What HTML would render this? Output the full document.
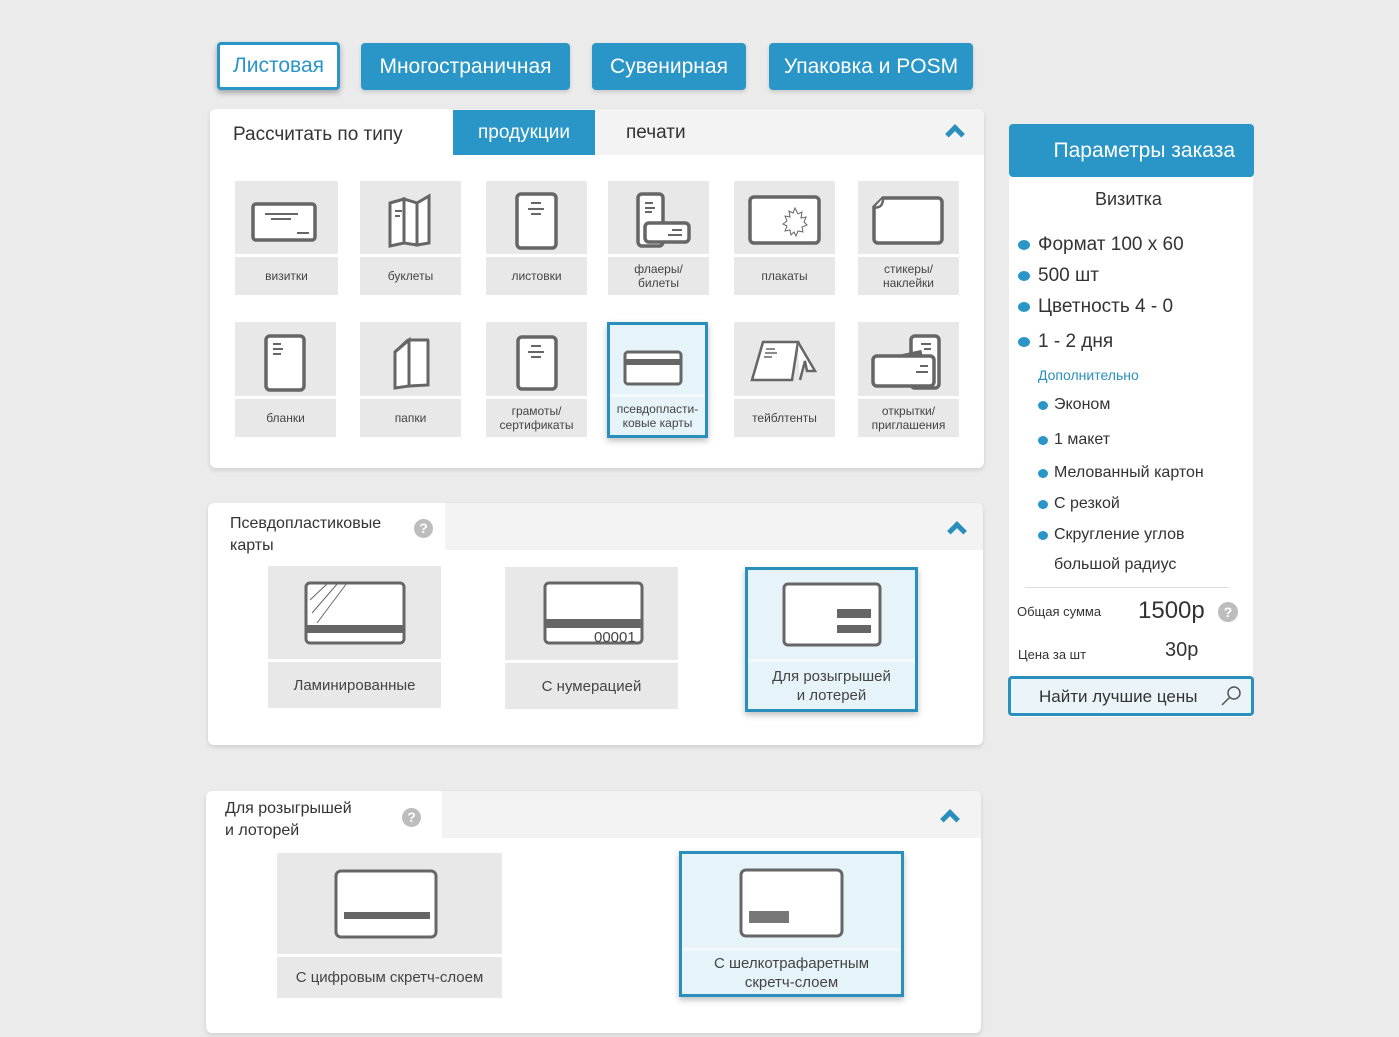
<!DOCTYPE html>
<html><head><meta charset="utf-8"><style>
*{box-sizing:border-box;margin:0;padding:0}
body{width:1399px;height:1037px;background:#ebebeb;font-family:"Liberation Sans",sans-serif;color:#333;position:relative;overflow:hidden}
.a{position:absolute}
.tab{position:absolute;background:#2a96c8;color:#fff;font-size:21px;border-radius:4px;display:flex;align-items:center;justify-content:center;box-shadow:0 2px 4px rgba(0,0,0,.15)}
.panel{position:absolute;background:#fff;border-radius:6px;box-shadow:0 2px 5px rgba(0,0,0,.12);overflow:hidden}
.tile{position:absolute;background:#e8e8e8}
.tile .lab{position:absolute;left:0;right:0;bottom:0;display:flex;align-items:center;justify-content:center;text-align:center;font-size:12px;color:#444;line-height:14px;border-top:3px solid #fff}
.tile svg{position:absolute;left:0;top:0}
.sel{background:#e6f3f9;border:3px solid #2a8fbd;box-shadow:0 3px 6px rgba(0,0,0,.25)}
.chev{position:absolute;width:14px;height:14px;border-left:5px solid #2a8fbd;border-top:5px solid #2a8fbd;transform:rotate(45deg)}
.q{position:absolute;width:19px;height:19px;border-radius:50%;background:#bdbdbd;color:#fff;font-size:14px;font-weight:bold;text-align:center;line-height:19px}
.big .lab{font-size:15px;line-height:19px}
.dot{position:absolute;width:12px;height:10px;border-radius:50%;background:#2a96c8}
.rt{position:absolute;font-size:19px;color:#333}
.st{position:absolute;font-size:16px;color:#333}
</style></head><body>

<div class="tab" style="left:217px;top:42px;width:123px;height:48px;background:#fff;color:#2a96c8;border:3px solid #2a96c8;box-shadow:0 3px 6px rgba(0,0,0,.3)">Листовая</div>
<div class="tab" style="left:361px;top:43px;width:209px;height:47px">Многостраничная</div>
<div class="tab" style="left:592px;top:43px;width:154px;height:47px">Сувенирная</div>
<div class="tab" style="left:769px;top:43px;width:204px;height:47px">Упаковка и POSM</div>

<!-- panel 1 -->
<div class="panel" style="left:210px;top:109px;width:774px;height:359px">
  <div class="a" style="left:243px;top:0;width:531px;height:46px;background:#f3f3f3"></div>
  <div class="a" style="left:243px;top:1px;width:142px;height:45px;background:#2a96c8;color:#fff;font-size:19px;display:flex;align-items:center;justify-content:center">продукции</div>
  <div class="a" style="left:23px;top:15px;font-size:19px">Рассчитать по типу</div>
  <div class="a" style="left:416px;top:13px;font-size:19px">печати</div>
  <div class="chev" style="left:738px;top:18px"></div>
</div>

<!-- row1 -->
<div class="tile" style="left:235px;top:181px;width:103px;height:114px"><svg width="103" height="74" fill="#fff" stroke="#666" stroke-width="3.5"><rect x="18" y="23" width="62" height="36" rx="3"/><path d="M30 33h33M36 38h20M62 52h12" stroke-width="2"/></svg><div class="lab" style="height:41px">визитки</div></div>
<div class="tile" style="left:360px;top:181px;width:101px;height:114px"><svg width="101" height="74" fill="#fff" stroke="#666" stroke-width="3"><path d="M30 22l14-4v44l-14 3z"/><path d="M44 18l13 4v42l-13-2z"/><path d="M57 22l12-7v47l-12 2z"/><path d="M35 30h7M35 35h5" stroke-width="2"/></svg><div class="lab" style="height:41px">буклеты</div></div>
<div class="tile" style="left:486px;top:181px;width:101px;height:114px"><svg width="101" height="74" fill="#fff" stroke="#666" stroke-width="3.5"><rect x="31" y="13" width="39" height="54" rx="4"/><path d="M45 22h10M42 28h16M45 33h10" stroke-width="2"/></svg><div class="lab" style="height:41px">листовки</div></div>
<div class="tile" style="left:608px;top:181px;width:101px;height:114px"><svg width="101" height="74" fill="#fff" stroke="#666" stroke-width="3.5"><rect x="30" y="13" width="25" height="52" rx="4"/><path d="M37 22h8M37 27h10M37 31h7" stroke-width="2"/><rect x="37" y="42" width="44" height="19" rx="4"/><path d="M64 49h10M60 54h14" stroke-width="2"/></svg><div class="lab" style="height:41px">флаеры/<br>билеты</div></div>
<div class="tile" style="left:734px;top:181px;width:101px;height:114px"><svg width="101" height="74" fill="#fff" stroke="#666" stroke-width="3.5"><rect x="16" y="16" width="69" height="46" rx="4"/><path d="M61 27l3 6 4-2-1 6 5-1-2 5 3 3-5 2 1 5-5-1-2 5-2-4-3 3-1-5-5 1 2-5-4-2 4-3-2-5 5 1-1-6 4 2z" stroke-width="1" fill="#fff"/></svg><div class="lab" style="height:41px">плакаты</div></div>
<div class="tile" style="left:858px;top:181px;width:101px;height:114px"><svg width="101" height="74" fill="#fff" stroke="#666" stroke-width="3.5"><path d="M25 17h55a4 4 0 0 1 4 4v37a4 4 0 0 1-4 4H20a4 4 0 0 1-4-4V26z"/><path d="M16 27c4-1 9 0 9-10" stroke-width="2.5"/></svg><div class="lab" style="height:41px">стикеры/<br>наклейки</div></div>

<!-- row2 -->
<div class="tile" style="left:235px;top:322px;width:101px;height:115px"><svg width="101" height="74" fill="#fff" stroke="#666" stroke-width="3.5"><rect x="31" y="14" width="38" height="54" rx="4"/><path d="M38 22h8M38 27h10M38 32h8" stroke-width="2"/></svg><div class="lab" style="height:41px">бланки</div></div>
<div class="tile" style="left:360px;top:322px;width:101px;height:115px"><svg width="101" height="74" fill="#fff" stroke="#666" stroke-width="3"><path d="M35 30l14-12v46l-14 2z"/><path d="M49 18l20 0-1 0v45l-19 1z"/><path d="M35 30l13-12" stroke-width="3"/></svg><div class="lab" style="height:41px">папки</div></div>
<div class="tile" style="left:486px;top:322px;width:101px;height:115px"><svg width="101" height="74" fill="#fff" stroke="#666" stroke-width="3.5"><rect x="32" y="15" width="38" height="52" rx="4"/><path d="M45 24h10M42 30h16M45 35h10" stroke-width="2"/></svg><div class="lab" style="height:41px">грамоты/<br>сертификаты</div></div>
<div class="tile sel" style="left:607px;top:322px;width:101px;height:116px"><svg width="95" height="74" fill="#fff" stroke="#666" stroke-width="3"><rect x="15" y="27" width="56" height="32" rx="3"/><rect x="16" y="34" width="54" height="6" fill="#666" stroke="none"/></svg><div class="lab" style="height:41px;border-top-color:#f2f9fc">псевдопласти-<br>ковые карты</div></div>
<div class="tile" style="left:734px;top:322px;width:101px;height:115px"><svg width="101" height="74" fill="#fff" stroke="#666" stroke-width="2.5"><path d="M29 20h35l-6 38H18z"/><path d="M64 20l17 29-8 0-2-10-5 19"/><path d="M32 27h9M31 31h12M30 35h8" stroke-width="1.5"/></svg><div class="lab" style="height:41px">тейблтенты</div></div>
<div class="tile" style="left:858px;top:322px;width:101px;height:115px"><svg width="101" height="74" fill="#fff" stroke="#666" stroke-width="3.5"><rect x="53" y="14" width="28" height="52" rx="4"/><path d="M16 40l46-10 4 20-46 10z"/><rect x="15" y="34" width="61" height="30" rx="4"/><path d="M62 44h8M58 50h12" stroke-width="2"/><path d="M63 22h10M66 27h7" stroke-width="2"/></svg><div class="lab" style="height:41px">открытки/<br>приглашения</div></div>

<!-- panel 2 -->
<div class="panel" style="left:208px;top:503px;width:775px;height:242px">
  <div class="a" style="left:237px;top:0;width:538px;height:47px;background:#f3f3f3"></div>
  <div class="a" style="left:22px;top:10px;font-size:16px;line-height:22px">Псевдопластиковые<br>карты</div>
  <div class="q" style="left:206px;top:16px">?</div>
  <div class="chev" style="left:742px;top:21px"></div>
</div>
<div class="tile big" style="left:268px;top:566px;width:173px;height:142px"><svg width="173" height="95" fill="#fff" stroke="#666" stroke-width="3"><rect x="38" y="17" width="98" height="60" rx="4"/><rect x="39" y="59" width="96" height="8" fill="#666" stroke="none"/><path d="M42 34l18-17M44 47l26-30M49 57l30-40" stroke-width="1"/></svg><div class="lab" style="height:49px">Ламинированные</div></div>
<div class="tile big" style="left:505px;top:567px;width:173px;height:142px"><svg width="173" height="95" fill="#fff" stroke="#666" stroke-width="3"><rect x="40" y="16" width="97" height="60" rx="4"/><rect x="41" y="52" width="95" height="9" fill="#666" stroke="none"/><text x="89" y="75" font-size="15" fill="#444" stroke="none" font-family="Liberation Sans">00001</text></svg><div class="lab" style="height:49px">С нумерацией</div></div>
<div class="tile big sel" style="left:745px;top:567px;width:173px;height:145px"><svg width="167" height="95" fill="#fff" stroke="#666" stroke-width="3"><rect x="36" y="14" width="96" height="61" rx="4"/><rect x="89" y="39" width="34" height="9" fill="#666" stroke="none"/><rect x="89" y="55" width="34" height="8" fill="#666" stroke="none"/></svg><div class="lab" style="height:50px;border-top-color:#f2f9fc">Для розыгрышей<br>и лотерей</div></div>

<!-- panel 3 -->
<div class="panel" style="left:206px;top:791px;width:775px;height:242px">
  <div class="a" style="left:236px;top:0;width:539px;height:47px;background:#f3f3f3"></div>
  <div class="a" style="left:19px;top:7px;font-size:16px;line-height:22px">Для розыгрышей<br>и лоторей</div>
  <div class="q" style="left:196px;top:17px">?</div>
  <div class="chev" style="left:737px;top:21px"></div>
</div>
<div class="tile big" style="left:277px;top:853px;width:225px;height:145px"><svg width="225" height="100" fill="#fff" stroke="#666" stroke-width="3"><rect x="59" y="18" width="100" height="66" rx="5"/><rect x="67" y="59" width="86" height="7" fill="#666" stroke="none"/></svg><div class="lab" style="height:44px">С цифровым скретч-слоем</div></div>
<div class="tile big sel" style="left:679px;top:851px;width:225px;height:146px"><svg width="219" height="100" fill="#fff" stroke="#666" stroke-width="3"><rect x="59" y="16" width="101" height="66" rx="5"/><rect x="67" y="57" width="40" height="12" fill="#777" stroke="none"/></svg><div class="lab" style="height:46px;border-top-color:#f2f9fc">С шелкотрафаретным<br>скретч-слоем</div></div>

<!-- right panel -->
<div class="a" style="left:1009px;top:170px;width:244px;height:547px;background:#fff"></div>
<div class="a" style="left:1009px;top:124px;width:245px;height:53px;background:#2a96c8;border-radius:4px;color:#fff;font-size:21px;display:flex;align-items:center;justify-content:flex-end;padding-right:19px">Параметры заказа</div>
<div class="a" style="left:1095px;top:189px;font-size:18px">Визитка</div>
<div class="dot" style="left:1018px;top:240px"></div><div class="rt" style="left:1038px;top:234px">Формат 100 x 60</div>
<div class="dot" style="left:1018px;top:271px"></div><div class="rt" style="left:1038px;top:265px">500 шт</div>
<div class="dot" style="left:1018px;top:302px"></div><div class="rt" style="left:1038px;top:296px">Цветность 4 - 0</div>
<div class="dot" style="left:1018px;top:337px"></div><div class="rt" style="left:1038px;top:331px">1 - 2 дня</div>
<div class="a" style="left:1038px;top:367px;font-size:14px;color:#2a8fbd">Дополнительно</div>
<div class="dot" style="left:1038px;top:401px;width:10px;height:9px"></div><div class="st" style="left:1054px;top:396px">Эконом</div>
<div class="dot" style="left:1038px;top:436px;width:10px;height:9px"></div><div class="st" style="left:1054px;top:431px">1 макет</div>
<div class="dot" style="left:1038px;top:469px;width:10px;height:9px"></div><div class="st" style="left:1054px;top:464px">Мелованный картон</div>
<div class="dot" style="left:1038px;top:500px;width:10px;height:9px"></div><div class="st" style="left:1054px;top:495px">С резкой</div>
<div class="dot" style="left:1038px;top:531px;width:10px;height:9px"></div><div class="st" style="left:1054px;top:526px">Скругление углов</div>
<div class="st" style="left:1054px;top:556px">большой радиус</div>
<div class="a" style="left:1025px;top:587px;width:204px;height:1px;background:#ddd"></div>
<div class="a" style="left:1017px;top:604px;font-size:13px">Общая сумма</div>
<div class="a" style="left:1138px;top:597px;font-size:24px">1500р</div>
<div class="q" style="left:1218px;top:602px;width:20px;height:20px;line-height:20px">?</div>
<div class="a" style="left:1018px;top:647px;font-size:13px">Цена за шт</div>
<div class="a" style="left:1165px;top:639px;font-size:20px">30р</div>
<div class="a" style="left:1008px;top:676px;width:246px;height:40px;background:#eaf4f9;border:3px solid #2a8fbd;border-radius:4px;font-size:17px;padding:8px 0 0 28px">Найти лучшие цены</div>
<svg class="a" style="left:1218px;top:683px" width="26" height="26" fill="none" stroke="#555" stroke-width="1.5"><circle cx="16" cy="10" r="6"/><path d="M12 14L4 22"/></svg>
</body></html>
